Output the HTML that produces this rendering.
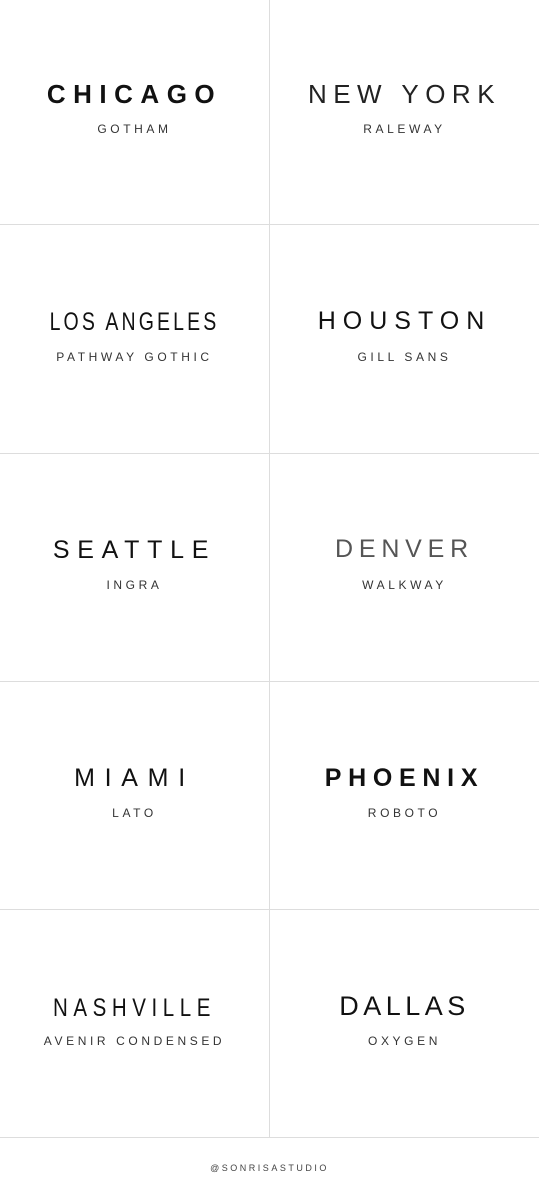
<!DOCTYPE html>
<html><head><meta charset="utf-8"><style>
html,body{margin:0;padding:0;background:#fff;}
body{width:539px;height:1199px;position:relative;overflow:hidden;font-family:"Liberation Sans",sans-serif;color:#111;}
.v{position:absolute;left:269px;top:0;width:1px;height:1137px;background:#ddd;}
.h{position:absolute;left:0;width:539px;height:1px;background:#ddd;}
.c{position:absolute;width:269px;text-align:center;}
.t{position:absolute;left:0;width:100%;font-size:26px;line-height:30px;white-space:nowrap;}
.s{position:absolute;left:0;width:100%;font-size:12px;line-height:14px;letter-spacing:3.6px;color:#333;white-space:nowrap;}
.foot{position:absolute;top:1163px;left:0;width:539px;text-align:center;font-size:9px;letter-spacing:2.5px;color:#444;}
</style></head><body>
<div class="v"></div>
<div class="h" style="top:224px"></div>
<div class="h" style="top:453px"></div>
<div class="h" style="top:681px"></div>
<div class="h" style="top:909px"></div>
<div class="h" style="top:1137px"></div>

<div class="c" style="left:0;top:0"><div class="t" style="top:79px;font-weight:bold;letter-spacing:7.5px">CHICAGO</div><div class="s" style="top:122px">GOTHAM</div></div>
<div class="c" style="left:270px;top:0"><div class="t" style="top:79px;letter-spacing:6.5px;color:#222">NEW YORK</div><div class="s" style="top:122px">RALEWAY</div></div>

<div class="c" style="left:0;top:228px"><div class="t" style="top:79px;letter-spacing:4px;transform:scaleX(0.78);font-size:25px">LOS ANGELES</div><div class="s" style="top:122px">PATHWAY GOTHIC</div></div>
<div class="c" style="left:270px;top:228px"><div class="t" style="top:78px;letter-spacing:7px;font-size:25px">HOUSTON</div><div class="s" style="top:122px">GILL SANS</div></div>

<div class="c" style="left:0;top:456px"><div class="t" style="top:79px;letter-spacing:7.7px;font-size:25px">SEATTLE</div><div class="s" style="top:122px">INGRA</div></div>
<div class="c" style="left:270px;top:456px"><div class="t" style="top:78px;letter-spacing:5.8px;font-size:25px;color:#555">DENVER</div><div class="s" style="top:122px">WALKWAY</div></div>

<div class="c" style="left:0;top:684px"><div class="t" style="top:79px;letter-spacing:9.7px;font-size:25px">MIAMI</div><div class="s" style="top:122px">LATO</div></div>
<div class="c" style="left:270px;top:684px"><div class="t" style="top:79px;letter-spacing:6.7px;font-weight:bold;font-size:25px">PHOENIX</div><div class="s" style="top:122px">ROBOTO</div></div>

<div class="c" style="left:0;top:912px"><div class="t" style="top:81px;letter-spacing:6.8px;font-size:25px;transform:scaleX(0.82)">NASHVILLE</div><div class="s" style="top:122px">AVENIR CONDENSED</div></div>
<div class="c" style="left:270px;top:912px"><div class="t" style="top:79px;letter-spacing:4.5px;font-size:27px">DALLAS</div><div class="s" style="top:122px">OXYGEN</div></div>

<div class="foot">@SONRISASTUDIO</div>
</body></html>
